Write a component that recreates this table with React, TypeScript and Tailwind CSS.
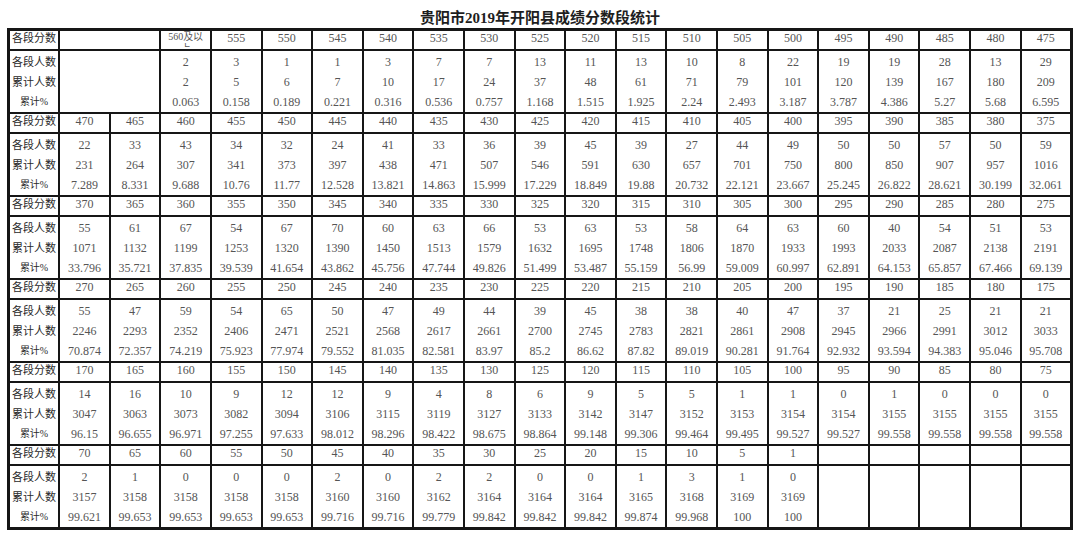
const serif = "font-['Liberation_Serif','Noto_Sans_CJK_SC',serif]";

type Block = { head: string[]; n: string[]; c: string[]; p: string[]; lead?: boolean };

const sp = (s: string) => s.split(" ");

const blocks: Block[] = [
  {
    lead: true,
    head: sp("560及以上 555 550 545 540 535 530 525 520 515 510 505 500 495 490 485 480 475"),
    n: sp("2 3 1 1 3 7 7 13 11 13 10 8 22 19 19 28 13 29"),
    c: sp("2 5 6 7 10 17 24 37 48 61 71 79 101 120 139 167 180 209"),
    p: sp("0.063 0.158 0.189 0.221 0.316 0.536 0.757 1.168 1.515 1.925 2.24 2.493 3.187 3.787 4.386 5.27 5.68 6.595"),
  },
  {
    head: sp("470 465 460 455 450 445 440 435 430 425 420 415 410 405 400 395 390 385 380 375"),
    n: sp("22 33 43 34 32 24 41 33 36 39 45 39 27 44 49 50 50 57 50 59"),
    c: sp("231 264 307 341 373 397 438 471 507 546 591 630 657 701 750 800 850 907 957 1016"),
    p: sp("7.289 8.331 9.688 10.76 11.77 12.528 13.821 14.863 15.999 17.229 18.849 19.88 20.732 22.121 23.667 25.245 26.822 28.621 30.199 32.061"),
  },
  {
    head: sp("370 365 360 355 350 345 340 335 330 325 320 315 310 305 300 295 290 285 280 275"),
    n: sp("55 61 67 54 67 70 60 63 66 53 63 53 58 64 63 60 40 54 51 53"),
    c: sp("1071 1132 1199 1253 1320 1390 1450 1513 1579 1632 1695 1748 1806 1870 1933 1993 2033 2087 2138 2191"),
    p: sp("33.796 35.721 37.835 39.539 41.654 43.862 45.756 47.744 49.826 51.499 53.487 55.159 56.99 59.009 60.997 62.891 64.153 65.857 67.466 69.139"),
  },
  {
    head: sp("270 265 260 255 250 245 240 235 230 225 220 215 210 205 200 195 190 185 180 175"),
    n: sp("55 47 59 54 65 50 47 49 44 39 45 38 38 40 47 37 21 25 21 21"),
    c: sp("2246 2293 2352 2406 2471 2521 2568 2617 2661 2700 2745 2783 2821 2861 2908 2945 2966 2991 3012 3033"),
    p: sp("70.874 72.357 74.219 75.923 77.974 79.552 81.035 82.581 83.97 85.2 86.62 87.82 89.019 90.281 91.764 92.932 93.594 94.383 95.046 95.708"),
  },
  {
    head: sp("170 165 160 155 150 145 140 135 130 125 120 115 110 105 100 95 90 85 80 75"),
    n: sp("14 16 10 9 12 12 9 4 8 6 9 5 5 1 1 0 1 0 0 0"),
    c: sp("3047 3063 3073 3082 3094 3106 3115 3119 3127 3133 3142 3147 3152 3153 3154 3154 3155 3155 3155 3155"),
    p: sp("96.15 96.655 96.971 97.255 97.633 98.012 98.296 98.422 98.675 98.864 99.148 99.306 99.464 99.495 99.527 99.527 99.558 99.558 99.558 99.558"),
  },
  {
    head: sp("70 65 60 55 50 45 40 35 30 25 20 15 10 5 1"),
    n: sp("2 1 0 0 0 2 0 2 2 0 0 1 3 1 0"),
    c: sp("3157 3158 3158 3158 3158 3160 3160 3162 3164 3164 3164 3165 3168 3169 3169"),
    p: sp("99.621 99.653 99.653 99.653 99.653 99.716 99.716 99.779 99.842 99.842 99.842 99.874 99.968 100 100"),
  },
];

const cell = "border-2 border-[#161616] p-0 text-center align-top overflow-hidden whitespace-nowrap";

function BlockRows({ b }: { b: Block }) {
  const cols = b.lead ? 18 : 20;
  const pad = (a: string[]) => Array.from({ length: cols }, (_, i) => a[i] ?? "");
  const head = pad(b.head);
  const n = pad(b.n);
  const c = pad(b.c);
  const p = pad(b.p);
  return (
    <>
      <tr className="h-[20px]">
        <td className={`${cell} align-middle text-[11px] leading-[15px] text-[#2a2a2a]`}>各段分数</td>
        {b.lead && <td colSpan={2} className={cell} />}
        {head.map((h, i) =>
          h.length > 4 ? (
            <td key={i} className={cell}>
              <div className="h-[16px] overflow-hidden whitespace-normal px-[4px] text-[10px] leading-[12px] text-[#555]">{h}</div>
            </td>
          ) : (
            <td key={i} className={`${cell} align-middle text-[12px] leading-[15px] text-[#555]`}>
              {h}
            </td>
          )
        )}
      </tr>
      <tr className="h-[63px]">
        <td className={cell}>
          <div className="flex flex-col pt-[1px] text-[11px] leading-[20px] text-[#2a2a2a]">
            <span className="h-[20px]">各段人数</span>
            <span className="h-[20px]">累计人数</span>
            <span className="h-[20px] text-[10px]">累计%</span>
          </div>
        </td>
        {b.lead && <td colSpan={2} className={cell} />}
        {n.map((v, i) => (
          <td key={i} className={cell}>
            <div className="flex flex-col pt-[1px] text-[12px] leading-[20px] text-[#555]">
              <span className="h-[20px]">{v}</span>
              <span className="h-[20px]">{c[i]}</span>
              <span className="h-[20px]">{p[i]}</span>
            </div>
          </td>
        ))}
      </tr>
    </>
  );
}

export default function App() {
  return (
    <div className={`w-[1080px] h-[534px] bg-white ${serif}`}>
      <div className="h-[28px] pt-[10px] text-center text-[15px] font-bold leading-[17px] text-[#1e1e1e]">
        贵阳市2019年开阳县成绩分数段统计
      </div>
      <table className="ml-[7px] w-[1066px] table-fixed border-collapse border-[3px] border-[#161616]">
        <colgroup>
          {Array.from({ length: 21 }, (_, i) => (
            <col key={i} />
          ))}
        </colgroup>
        <tbody>
          {blocks.map((b, i) => (
            <BlockRows key={i} b={b} />
          ))}
        </tbody>
      </table>
    </div>
  );
}
